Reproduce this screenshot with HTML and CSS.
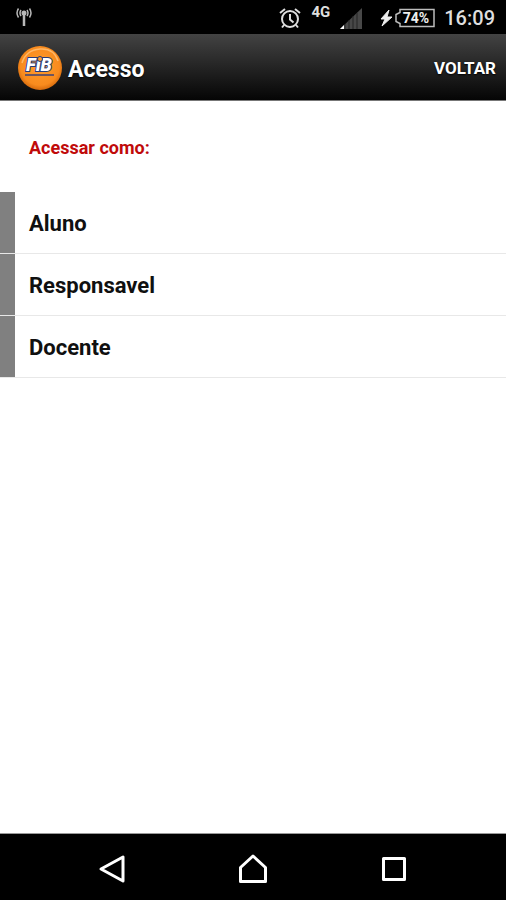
FILE: index.html
```html
<!DOCTYPE html>
<html lang="pt-BR">
<head>
<meta charset="utf-8">
<meta name="viewport" content="width=device-width, initial-scale=1">
<title>Acesso</title>
<link rel="stylesheet" href="styles.css">
</head>
<body>
<div class="status">
  <svg class="antenna" width="16" height="20" viewBox="0 0 16 20" fill="none" stroke="#b8b8b8" aria-hidden="true">
    <path d="M8 6v13" stroke-width="2.500"/>
    <circle cx="8" cy="6" r="2.500" fill="#b8b8b8" stroke="none"/>
    <path d="M5 3q-2 3 0 6M11 3q2 3 0 6M2.500 1.500q-3 4.500 0 9M13.500 1.500q3 4.500 0 9" stroke-width="1.500"/>
  </svg>
  <div class="indicators">
    <svg width="22" height="22" viewBox="0 0 22 22" fill="none" stroke="#dedede" stroke-width="2" aria-hidden="true">
      <circle cx="11" cy="12" r="8"/>
      <path d="M11 7v5.500l3.500 3M1 6l5-4M21 6l-5-4M5 18l-2 2.500M17 18l2 2.500"/>
    </svg>
    <span class="network">4G</span>
    <svg class="signal" width="22" height="21" viewBox="0 0 22 21" aria-hidden="true">
      <path d="M0 21L22 0v21z" fill="#484848"/>
      <path d="M5 16v5M9 12v9M13 8v13M17 5v16" stroke="#252525"/>
      <path d="M0 21l4-4v4z" fill="#fff"/>
    </svg>
    <svg class="battery" width="56" height="20" viewBox="0 0 56 20" aria-hidden="true">
      <path d="M9 2L1 11h4l-3 7 10-9H7z" fill="#eee" stroke="#eee"/>
      <path d="M20 1.500h34v17H20v-3l-4-2v-7l4-2z" fill="none" stroke="#bcbcbc" stroke-width="1.500"/>
      <text class="charge" x="36" y="15" text-anchor="middle">74%</text>
    </svg>
    <time class="clock">16:09</time>
  </div>
</div>
<header class="bar">
  <svg class="logo" width="46" height="46" viewBox="0 0 46 46" role="img" aria-label="FiB">
    <defs>
      <radialGradient id="orange" cx=".5" cy=".45" r=".55">
        <stop offset="0" stop-color="#ff9c2c"/>
        <stop offset=".8" stop-color="#f88b1e"/>
        <stop offset="1" stop-color="#d56a0d"/>
      </radialGradient>
    </defs>
    <circle cx="23" cy="23" r="22" fill="url(#orange)"/>
    <path d="M5 18Q9 5 23 4t18 12" fill="none" stroke="#ffb766" stroke-width="1.500"/>
    <text class="wordmark" x="22" y="26" text-anchor="middle">FıB</text>
    <circle cx="23" cy="14" r="2.500" fill="#ff9c2c" stroke="#263b7a"/>
    <path d="M8 30h29" stroke="#6d5560" stroke-width="2"/>
  </svg>
  <h1 class="title">Acesso</h1>
  <button class="back" type="button">VOLTAR</button>
</header>
<main class="content">
  <h2 class="prompt">Acessar como:</h2>
  <ul class="roles">
    <li><a class="role" href="#aluno">Aluno</a></li>
    <li><a class="role" href="#responsavel">Responsavel</a></li>
    <li><a class="role" href="#docente">Docente</a></li>
  </ul>
</main>
<nav class="keys" aria-label="Sistema">
  <button class="key" type="button" aria-label="Voltar">
    <svg width="30" height="30" viewBox="0 0 30 30"><path d="M4 15L26 3v24z"/></svg>
  </button>
  <button class="key" type="button" aria-label="Início">
    <svg width="30" height="30" viewBox="0 0 30 30"><path d="M2.500 13.500L15 2l12.500 11.500v14h-25z"/></svg>
  </button>
  <button class="key" type="button" aria-label="Recentes">
    <svg width="30" height="30" viewBox="0 0 30 30"><path d="M4.500 4.500h21v21h-21z"/></svg>
  </button>
</nav>
</body>
</html>
```
FILE: styles.css
```css
* {
  box-sizing: border-box;
}

body {
  margin: 0;
  min-height: 100vh;
  display: flex;
  flex-direction: column;
  background: #fff;
  color: #101010;
  font-family: Roboto, "Liberation Sans", sans-serif;
}

svg {
  display: block;
  flex: none;
}

button {
  border: 0;
  padding: 0;
  background: none;
  font: inherit;
  color: inherit;
}

.status {
  display: flex;
  align-items: center;
  justify-content: space-between;
  height: 34px;
  padding: 0 11px 0 16px;
  background: #000;
  color: #dedede;
}

.indicators {
  display: flex;
  align-items: center;
  gap: 10px;
  padding-top: 2px;
}

.battery {
  margin-right: -2px;
}

.network {
  align-self: flex-start;
  font-size: 15px;
  font-weight: 700;
  line-height: 12px;
}

.signal {
  margin-right: 8px;
}

.charge {
  fill: #eee;
  font-size: 14px;
  font-weight: 700;
}

.clock {
  font-size: 20px;
  font-weight: 500;
  line-height: 24px;
}

.bar {
  display: flex;
  align-items: center;
  gap: 5px;
  height: 67px;
  padding: 2px 10px 0 17px;
  background: linear-gradient(#434343, #050505);
  border-bottom: 1px solid #777;
  color: #fff;
  text-shadow: 0 1px 2px #000;
}

.wordmark {
  fill: #fff;
  stroke: #263b7a;
  stroke-width: 2px;
  paint-order: stroke;
  font-size: 18px;
  font-style: italic;
  font-weight: 900;
  text-shadow: none;
}

.title {
  flex: 1;
  margin: 0;
  padding-top: 4px;
  font-size: 23px;
  font-weight: 700;
  line-height: 28px;
}

.back {
  font-size: 17px;
  font-weight: 700;
  line-height: 24px;
  text-shadow: inherit;
}

.content {
  flex: 1;
}

.prompt {
  margin: 0;
  padding: 35px 29px 32px;
  color: #c00a0a;
  font-size: 18px;
  font-weight: 700;
  line-height: 24px;
}

.roles {
  margin: 0;
  padding: 0;
  list-style: none;
}

.roles li {
  border-bottom: 1px solid #e8e8e8;
}

.role {
  display: flex;
  align-items: center;
  min-height: 61px;
  padding: 2px 14px 0;
  border-left: 15px solid #808080;
  color: inherit;
  font-size: 22px;
  font-weight: 700;
  line-height: 28px;
  text-decoration: none;
}

.keys {
  display: grid;
  grid-template-columns: repeat(3, 1fr);
  height: 67px;
  padding: 4px 42px 0;
  border-top: 1px solid #999;
  background: #000;
}

.key {
  display: flex;
  align-items: center;
  justify-content: center;
}

.key svg {
  fill: none;
  stroke: #fff;
  stroke-width: 3px;
  stroke-linejoin: round;
}
```
